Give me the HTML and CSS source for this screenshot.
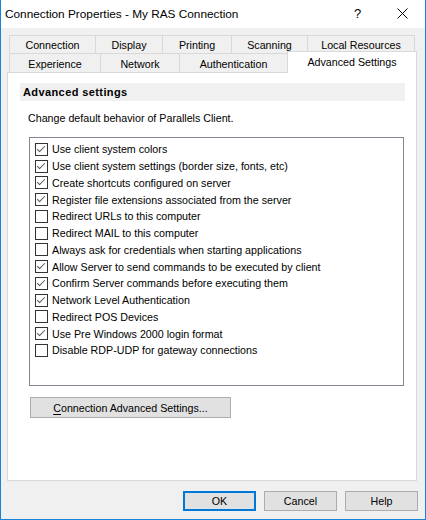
FILE: index.html
```html
<!DOCTYPE html>
<html>
<head>
<meta charset="utf-8">
<link rel="stylesheet" href="styles.css">
</head>
<body>
<div class="window">
  <div class="titlebar">
    <span class="title">Connection Properties - My RAS Connection</span>
    <span class="cap-btn help">?</span>
    <span class="cap-btn close">
      <svg width="11" height="11" viewBox="0 0 11 11"><path d="M0.5 0.5 L10.5 10.5 M10.5 0.5 L0.5 10.5" stroke="#000" stroke-width="1" fill="none"/></svg>
    </span>
  </div>
  <div class="client">
    <div class="tabs">
      <div class="tabrow back">
        <div class="tab t-conn">Connection</div>
        <div class="tab t-disp">Display</div>
        <div class="tab t-print">Printing</div>
        <div class="tab t-scan">Scanning</div>
        <div class="tab t-local last">Local Resources</div>
      </div>
      <div class="tabrow front">
        <div class="tab t-exp">Experience</div>
        <div class="tab t-net">Network</div>
        <div class="tab t-auth">Authentication</div>
        <div class="tab t-adv selected">Advanced Settings</div>
      </div>
    </div>
    <div class="panel">
      <div class="section-head">Advanced settings</div>
      <div class="desc">Change default behavior of Parallels Client.</div>
      <div class="listbox">
        <div class="item"><span class="cb on"></span>Use client system colors</div>
        <div class="item"><span class="cb on"></span>Use client system settings (border size, fonts, etc)</div>
        <div class="item"><span class="cb on"></span>Create shortcuts configured on server</div>
        <div class="item"><span class="cb on"></span>Register file extensions associated from the server</div>
        <div class="item"><span class="cb"></span>Redirect URLs to this computer</div>
        <div class="item"><span class="cb"></span>Redirect MAIL to this computer</div>
        <div class="item"><span class="cb"></span>Always ask for credentials when starting applications</div>
        <div class="item"><span class="cb on"></span>Allow Server to send commands to be executed by client</div>
        <div class="item"><span class="cb on"></span>Confirm Server commands before executing them</div>
        <div class="item"><span class="cb on"></span>Network Level Authentication</div>
        <div class="item"><span class="cb"></span>Redirect POS Devices</div>
        <div class="item"><span class="cb on"></span>Use Pre Windows 2000 login format</div>
        <div class="item"><span class="cb"></span>Disable RDP-UDP for gateway connections</div>
      </div>
      <div class="btn adv-btn"><span><u>C</u>onnection Advanced Settings...</span></div>
    </div>
    <div class="footer">
      <div class="btn dlg-btn default">OK</div>
      <div class="btn dlg-btn">Cancel</div>
      <div class="btn dlg-btn">Help</div>
    </div>
  </div>
</div>
</body>
</html>
```
FILE: styles.css
```css
* { box-sizing: border-box; }
html, body { margin: 0; padding: 0; background: #f0f0f0; }
body { font-family: "Liberation Sans", Arial, sans-serif; font-size: 10.7px; color: #000; }

.window {
  width: 426px;
  height: 520px;
  border: 1px solid #1883d7;
  border-top: none;
  background: #f0f0f0;
  display: flex;
  flex-direction: column;
}

.titlebar {
  height: 28px;
  background: #fff;
  display: flex;
  align-items: center;
  flex: none;
}
.title {
  flex: 1;
  padding-left: 4px;
  font-size: 11.8px;
  padding-bottom: 1px;
}
.cap-btn {
  width: 46px;
  height: 28px;
  display: flex;
  align-items: center;
  justify-content: center;
}
.cap-btn.help { font-size: 13px; padding-left: 3px; padding-bottom: 1px; }
.cap-btn.close svg { display: block; margin-left: 1px; margin-bottom: 1px; }

.client {
  flex: 1;
  display: flex;
  flex-direction: column;
  padding: 7px 7px 0 6px;
}

.tabs { margin-left: 2px; }
.tabrow { display: flex; }
.tabrow.back { height: 18px; }
.tabrow.front { height: 19px; align-items: flex-start; }
.tab {
  border-left: 1px solid #d9d9d9;
  border-top: 1px solid #d9d9d9;
  background: #f0f0f0;
  display: flex;
  justify-content: center;
  align-items: center;
  white-space: nowrap;
  height: 100%;
}
.tabrow.back .tab { padding-top: 1px; }
.tabrow.front .tab { padding-top: 1px; }
.tab.last { border-right: 1px solid #d9d9d9; }
.t-conn { width: 86px; }
.t-disp { width: 67px; }
.t-print { width: 69px; }
.t-scan { width: 76px; }
.t-local { width: 108px; }
.t-exp { width: 91px; }
.t-net { width: 79px; }
.t-auth { width: 108px; }
.tab.selected {
  width: 130px;
  height: 22px;
  margin-top: -2px;
  background: #fff;
  border-right: 1px solid #d9d9d9;
  position: relative;
  z-index: 1;
  padding-top: 0;
  padding-bottom: 2px;
}

.panel {
  width: 410px;
  height: 409px;
  background: #fff;
  border: 1px solid #d9d9d9;
  flex: none;
  padding: 10px 11px 0 12px;
}
.section-head {
  height: 18px;
  background: #f0f0f0;
  font-weight: bold;
  font-size: 11px;
  letter-spacing: 0.4px;
  padding-left: 3px;
  display: flex;
  align-items: center;
}
.desc {
  margin-top: 10px;
  height: 14px;
  line-height: 14px;
  padding-left: 8px;
}
.listbox {
  margin-top: 12px;
  margin-left: 9px;
  width: 375px;
  height: 249px;
  border: 1px solid #828790;
  padding-top: 3px;
  padding-left: 5px;
}
.item {
  height: 16.75px;
  display: flex;
  align-items: center;
  white-space: nowrap;
}
.cb {
  width: 13px;
  height: 13px;
  border: 1px solid #333;
  background: #fff;
  margin-right: 4px;
  flex: none;
  position: relative;
}
.cb.on::after {
  content: "";
  position: absolute;
  left: 3px;
  top: 0px;
  width: 3px;
  height: 7px;
  border-right: 1px solid #555;
  border-bottom: 1px solid #555;
  transform: rotate(45deg);
  transform-origin: center;
}

.btn {
  background: #e1e1e1;
  border: 1px solid #adadad;
  display: flex;
  align-items: center;
  justify-content: center;
  white-space: nowrap;
}
.adv-btn {
  margin-top: 11px;
  margin-left: 10px;
  width: 201px;
  height: 21px;
}
.adv-btn u { text-decoration: underline; text-underline-offset: 2px; }

.footer {
  display: flex;
  justify-content: flex-end;
  gap: 8px;
  padding-top: 10px;
  padding-right: 0;
}
.dlg-btn {
  width: 73px;
  height: 20px;
}
.dlg-btn.default { border: 2px solid #0078d7; }
```
